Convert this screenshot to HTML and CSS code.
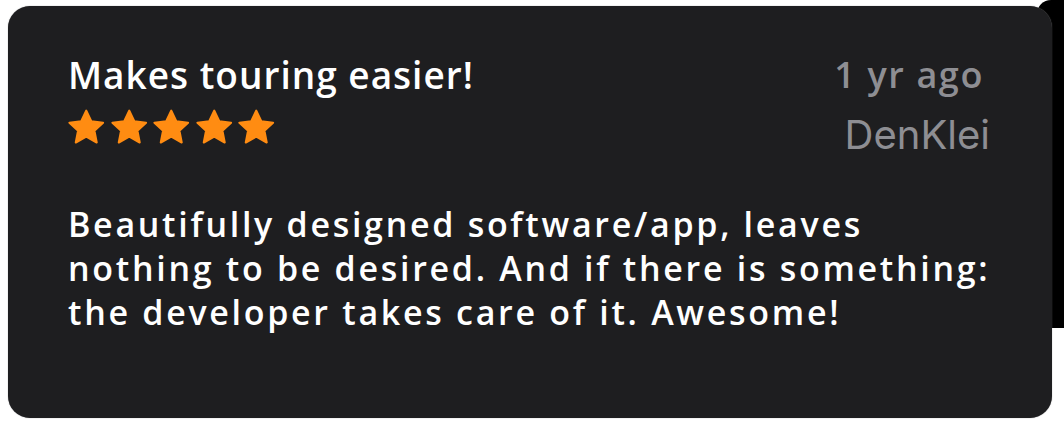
FILE: index.html
```html
<!DOCTYPE html>
<html lang="en">
<head>
    <meta charset="UTF-8">
    <meta name="viewport" content="width=device-width, initial-scale=1.0">
    <title>Review</title>
    <link rel="stylesheet" href="styles.css">
</head>
<body>
    <div class="edge"></div>
    <div class="card">
        <div class="head">
            <div class="head-left">
                <h2 class="title">Makes touring easier!</h2>
                <div class="stars">
                    <svg class="star" viewBox="0 0 24 24"><path d="M12 2.6l2.9 6.1 6.6.8-4.9 4.5 1.3 6.6L12 17.3l-5.9 3.3 1.3-6.6-4.9-4.5 6.6-.8z"/></svg>
                    <svg class="star" viewBox="0 0 24 24"><path d="M12 2.6l2.9 6.1 6.6.8-4.9 4.5 1.3 6.6L12 17.3l-5.9 3.3 1.3-6.6-4.9-4.5 6.6-.8z"/></svg>
                    <svg class="star" viewBox="0 0 24 24"><path d="M12 2.6l2.9 6.1 6.6.8-4.9 4.5 1.3 6.6L12 17.3l-5.9 3.3 1.3-6.6-4.9-4.5 6.6-.8z"/></svg>
                    <svg class="star" viewBox="0 0 24 24"><path d="M12 2.6l2.9 6.1 6.6.8-4.9 4.5 1.3 6.6L12 17.3l-5.9 3.3 1.3-6.6-4.9-4.5 6.6-.8z"/></svg>
                    <svg class="star" viewBox="0 0 24 24"><path d="M12 2.6l2.9 6.1 6.6.8-4.9 4.5 1.3 6.6L12 17.3l-5.9 3.3 1.3-6.6-4.9-4.5 6.6-.8z"/></svg>
                </div>
            </div>
            <div class="head-right">
                <div class="date">1 yr ago</div>
                <div class="author">DenKlei</div>
            </div>
        </div>
        <p class="text">Beautifully designed software/app, leaves<br>nothing to be desired. And if there is something:<br>the developer takes care of it. Awesome!</p>
    </div>
</body>
</html>
```

FILE: styles.css
```css
body {
    margin: 0;
    padding: 6px 12px 5px 8px;
    background: #fff;
    font-family: "Open Sans", sans-serif;
}
.edge {
    position: absolute;
    top: 0;
    right: 0;
    width: 27px;
    height: 328px;
    background: #000;
    border-radius: 14px 0 0 14px;
}
.card {
    position: relative;
    height: 412px;
    box-sizing: border-box;
    background: #1e1e20;
    border-radius: 22px;
    box-shadow: 0 0 1px #777;
    padding: 44px 62px 0 60px;
    color: #fff;
}
.head {
    display: flex;
    justify-content: space-between;
}
.title {
    margin: 0;
    font-size: 37px;
    font-weight: 600;
    line-height: 50px;
    letter-spacing: 1px;
}
.stars {
    display: flex;
    margin: 6px 0 0 -3px;
}
.star {
    width: 42.5px;
    height: 42.5px;
    fill: #ff8c12;
    stroke: #ff8c12;
    stroke-width: 1.2;
    stroke-linejoin: round;
}
.head-right {
    text-align: right;
}
.date {
    font-size: 36px;
    font-weight: 600;
    line-height: 50px;
    letter-spacing: 1.6px;
    color: #8e8e93;
    margin-right: 6px;
}
.author {
    font-family: Inter, sans-serif;
    font-size: 40px;
    line-height: 50px;
    color: #8e8e93;
    margin-top: 10px;
}
.text {
    margin: 42px 0 0;
    font-size: 34px;
    line-height: 44px;
    font-weight: 600;
    letter-spacing: 2.7px;
    white-space: nowrap;
}
```
